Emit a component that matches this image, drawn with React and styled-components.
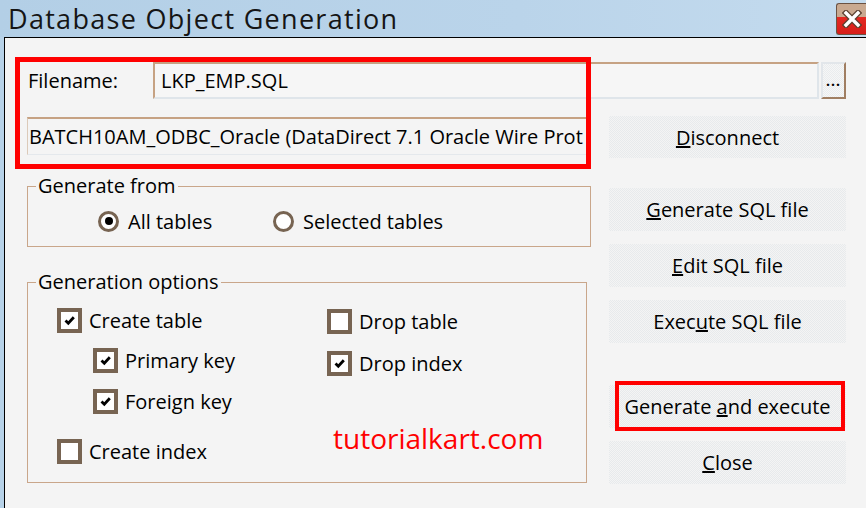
import React from "react";
import styled, { createGlobalStyle } from "styled-components";

const GlobalStyle = createGlobalStyle`
  body {
    margin: 0;
    background: #f4f4f4;
  }
  * {
    box-sizing: border-box;
  }
`;

const Frame = styled.div`
  width: 866px;
  height: 508px;
  overflow: hidden;
  display: flex;
  flex-direction: column;
  background: #b7d2e8;
  font-family: "Open Sans", "Noto Sans", sans-serif;
  color: #000;
`;

const TitleBar = styled.div`
  height: 37px;
  display: flex;
  justify-content: space-between;
  align-items: flex-start;
  padding-left: 8px;
  background: linear-gradient(90deg, #b3cfe6, #bad4ea 60%, #c4dbee);
`;

const Title = styled.div`
  font-size: 27px;
  line-height: 37px;
  letter-spacing: 1.3px;
  color: #151515;
`;

const CloseBox = styled.div`
  margin-top: 3px;
  width: 30px;
  height: 32px;
  border: 1px solid #6b5242;
  border-right: none;
  border-radius: 3px 0 0 3px;
  background: linear-gradient(#c9a990 0 42%, #e42a22 42%, #d61e1a);
  display: flex;
  align-items: center;
  justify-content: center;
`;

const Window = styled.div`
  flex: 1;
  position: relative;
  margin-left: 4px;
  background: #f4f4f4;
  border-top: 1px solid #000;
  border-left: 1px solid #000;
  padding: 24px 20px 0 22px;
`;

const FileRow = styled.div`
  height: 37px;
  display: flex;
  gap: 2px;
`;

const FieldLabel = styled.div`
  width: 124px;
  padding-left: 1px;
  display: flex;
  align-items: center;
  font-size: 20px;
`;

const TextBox = styled.div`
  flex: 1;
  display: flex;
  align-items: center;
  padding: 0 6px;
  border-style: solid;
  border-width: 2px;
  border-color: #c6a283 #dfe5ea #dfe5ea #c6a283;
  background: #f6f6f6;
  font-size: 20px;
`;

const BrowseButton = styled.div`
  width: 25px;
  display: flex;
  align-items: center;
  justify-content: center;
  border-style: solid;
  border-width: 2px;
  border-color: #e2e6ea #a07e62 #a07e62 #e2e6ea;
  background: repeating-conic-gradient(#e9ecee 0 25%, #f6f6f6 0 50%) 0 0 / 2px 2px;
  font-size: 14px;
  font-weight: 700;
  letter-spacing: 1px;
`;

const Columns = styled.div`
  display: flex;
  gap: 18px;
  margin-top: 17px;
`;

const LeftCol = styled.div`
  width: 564px;
  display: flex;
  flex-direction: column;
`;

const RightCol = styled.div`
  width: 237px;
  display: flex;
  flex-direction: column;
`;

const ConnField = styled.div`
  margin-top: 1px;
  height: 38px;
  display: flex;
  align-items: center;
  padding-left: 1px;
  overflow: hidden;
  white-space: nowrap;
  border-style: solid;
  border-width: 2px 0 1px 1px;
  border-color: #c6a283 transparent #e4e8ec #dccab9;
  font-size: 20px;
`;

const Group = styled.fieldset`
  margin: ${(p) => p.$top}px ${(p) => p.$inset}px 0 0;
  padding: ${(p) => p.$pad};
  border: 1px solid #c9a68a;
  min-width: 0;
`;

const Legend = styled.legend`
  margin-left: 8px;
  padding: 0 2px;
  font-size: 20px;
  line-height: 26px;
`;

const RadioRow = styled.div`
  display: grid;
  grid-template-columns: 175px auto;
  align-items: center;
  margin-left: 70px;
`;

const Option = styled.label`
  display: flex;
  align-items: center;
  gap: 9px;
  height: 24px;
  font-size: 20px;
`;

const Radio = styled.span`
  width: 21px;
  height: 21px;
  border-radius: 50%;
  border: 3.5px solid #776452;
  background: #fff;
  display: flex;
  align-items: center;
  justify-content: center;

  &::after {
    content: "";
    width: 8px;
    height: 8px;
    border-radius: 50%;
    background: ${(p) => (p.$checked ? "#000" : "transparent")};
  }
`;

const CheckGrid = styled.div`
  display: grid;
  grid-template-columns: 270px auto;
  align-items: start;
  margin-left: 29px;
`;

const CheckColumn = styled.div`
  display: flex;
  flex-direction: column;
  align-items: flex-start;
`;

const CheckItem = styled.label`
  display: flex;
  align-items: center;
  gap: 7px;
  height: 25px;
  margin-top: ${(p) => p.$top || 0}px;
  margin-left: ${(p) => p.$indent || 0}px;
  font-size: 20px;
`;

const Box = styled.span`
  width: 25px;
  height: 25px;
  border: 4px solid #776452;
  background: #fff;
  display: flex;
  align-items: center;
  justify-content: center;
`;

const Watermark = styled.div`
  margin: 46px 0 0 6px;
  font-size: 28px;
  line-height: 32px;
  color: #ff0000;
`;

const Button = styled.div`
  position: relative;
  height: ${(p) => p.$h || 43}px;
  margin-top: ${(p) => p.$top || 0}px;
  display: flex;
  align-items: center;
  justify-content: center;
  background: repeating-conic-gradient(#e7eaec 0 25%, #f4f4f4 0 50%) 0 0 / 2px 2px;
  font-size: 20px;
`;

const Highlight = styled.div`
  position: absolute;
  left: 6px;
  right: 1px;
  top: -4px;
  bottom: -3px;
  border: 4px solid #ff0000;
`;

const Annotation = styled.div`
  position: absolute;
  left: 10px;
  top: 19px;
  width: 576px;
  height: 112px;
  border: 5px solid #ff0000;
  pointer-events: none;
`;

const CloseIcon = () => (
  <svg width="20" height="18" viewBox="0 0 20 18">
    <path d="M4 3 L16 15 M16 3 L4 15" stroke="#5a4030" strokeWidth="6" strokeLinecap="square" />
    <path d="M4 3 L16 15 M16 3 L4 15" stroke="#fff" strokeWidth="3.4" strokeLinecap="square" />
  </svg>
);

const Check = ({ checked, label, top, indent }) => (
  <CheckItem $top={top} $indent={indent}>
    <Box>
      {checked && (
        <svg width="13" height="13" viewBox="0 0 13 13">
          <path d="M2.5 6.5 L5.3 9.3 L10.8 3.3" stroke="#000" strokeWidth="2.8" fill="none" />
        </svg>
      )}
    </Box>
    {label}
  </CheckItem>
);

const App = () => {
  return (
    <Frame>
      <GlobalStyle />
      <TitleBar>
        <Title>Database Object Generation</Title>
        <CloseBox>
          <CloseIcon />
        </CloseBox>
      </TitleBar>
      <Window>
        <FileRow>
          <FieldLabel>Filename:</FieldLabel>
          <TextBox>LKP_EMP.SQL</TextBox>
          <BrowseButton>...</BrowseButton>
        </FileRow>
        <Columns>
          <LeftCol>
            <ConnField>BATCH10AM_ODBC_Oracle (DataDirect 7.1 Oracle Wire Prot</ConnField>
            <Group $top={18} $inset={0} $pad="10px 0 13px 0">
              <Legend>Generate from</Legend>
              <RadioRow>
                <Option>
                  <Radio $checked />
                  All tables
                </Option>
                <Option>
                  <Radio />
                  Selected tables
                </Option>
              </RadioRow>
            </Group>
            <Group $top={22} $inset={4} $pad="13px 0 18px 0">
              <Legend>Generation options</Legend>
              <CheckGrid>
                <CheckColumn>
                  <Check checked label="Create table" />
                  <Check checked label="Primary key" top={15} indent={36} />
                  <Check checked label="Foreign key" top={16} indent={36} />
                  <Check label="Create index" top={25} />
                </CheckColumn>
                <CheckColumn>
                  <Check label="Drop table" top={1} />
                  <Check checked label="Drop index" top={17} />
                  <Watermark>tutorialkart.com</Watermark>
                </CheckColumn>
              </CheckGrid>
            </Group>
          </LeftCol>
          <RightCol>
            <Button $h={42}>
              <span>
                <u>D</u>isconnect
              </span>
            </Button>
            <Button $top={30}>
              <span>
                <u>G</u>enerate SQL file
              </span>
            </Button>
            <Button $top={13}>
              <span>
                <u>E</u>dit SQL file
              </span>
            </Button>
            <Button $top={13}>
              <span>
                Exec<u>u</u>te SQL file
              </span>
            </Button>
            <Button $top={42}>
              <span>
                Generate <u>a</u>nd execute
              </span>
              <Highlight />
            </Button>
            <Button $top={13}>
              <span>
                <u>C</u>lose
              </span>
            </Button>
          </RightCol>
        </Columns>
        <Annotation />
      </Window>
    </Frame>
  );
};

export default App;
